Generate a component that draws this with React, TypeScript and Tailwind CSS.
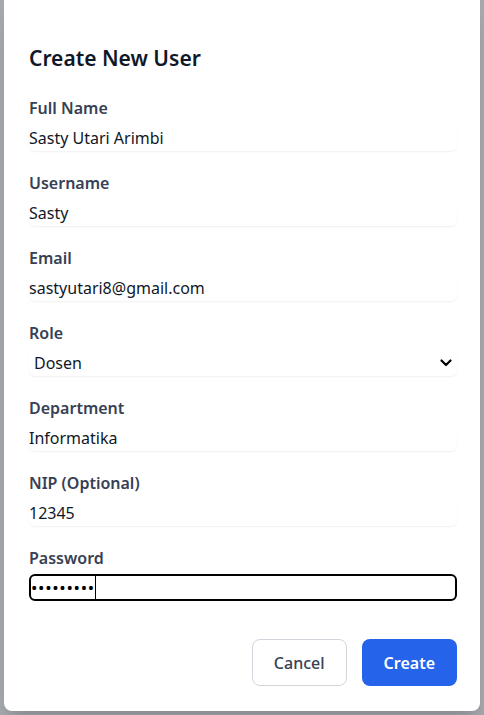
import { useState } from "react";

const fields = [
  { label: "Full Name", value: "Sasty Utari Arimbi", type: "text" },
  { label: "Username", value: "Sasty", type: "text" },
  { label: "Email", value: "sastyutari8@gmail.com", type: "email" },
];

const moreFields = [
  { label: "Department", value: "Informatika", type: "text" },
  { label: "NIP (Optional)", value: "12345", type: "text" },
];

function Field({ label, children }: { label: string; children: React.ReactNode }) {
  return (
    <div className="flex flex-col gap-1">
      <label className="text-base leading-6 font-semibold text-gray-700">{label}</label>
      {children}
    </div>
  );
}

function TextInput({ value, type }: { value: string; type: string }) {
  const [val, setVal] = useState(value);
  return (
    <input
      type={type}
      value={val}
      onChange={(e) => setVal(e.target.value)}
      className="h-[27px] w-full rounded-md bg-white px-0 text-base text-gray-900 shadow-[0_1px_2px_rgba(0,0,0,0.06)] outline-none"
    />
  );
}

export default function App() {
  const [role, setRole] = useState("Dosen");
  const [password, setPassword] = useState("sasty1234");

  return (
    <div
      className="h-[715px] w-full overflow-hidden bg-[#a5a8ad] px-[4px]"
      style={{ fontFamily: '"Noto Sans", "Open Sans", sans-serif' }}
    >
      <div className="rounded-b-lg bg-white pt-11 pr-[23px] pb-[25px] pl-[25px] shadow-xl">
        <h2 className="text-[21px] leading-7 font-semibold text-gray-900">Create New User</h2>

        <form className="mt-6 flex flex-col gap-5" onSubmit={(e) => e.preventDefault()}>
          {fields.map((f) => (
            <Field key={f.label} label={f.label}>
              <TextInput value={f.value} type={f.type} />
            </Field>
          ))}

          <Field label="Role">
            <div className="relative">
              <select
                value={role}
                onChange={(e) => setRole(e.target.value)}
                className="h-[27px] w-full appearance-none rounded-md bg-white pl-[5px] text-base text-gray-900 shadow-[0_1px_2px_rgba(0,0,0,0.06)] outline-none"
              >
                <option>Admin</option>
                <option>Dosen</option>
                <option>Mahasiswa</option>
              </select>
              <svg
                viewBox="0 0 12 8"
                className="pointer-events-none absolute top-[10px] right-[5px] h-[8px] w-[12px]"
                fill="none"
                stroke="black"
                strokeWidth="2.2"
                strokeLinecap="round"
                strokeLinejoin="round"
              >
                <path d="M1.5 1.5 6 6l4.5-4.5" />
              </svg>
            </div>
          </Field>

          {moreFields.map((f) => (
            <Field key={f.label} label={f.label}>
              <TextInput value={f.value} type={f.type} />
            </Field>
          ))}

          <Field label="Password">
            <div className="relative">
              <input
                type="password"
                value={password}
                onChange={(e) => setPassword(e.target.value)}
                className="h-[27px] w-full rounded-md border-2 border-black bg-white px-0 text-[17px] tracking-[0.7px] text-black caret-transparent outline-none"
              />
              <span className="pointer-events-none absolute top-[2px] bottom-[2px] left-[66px] w-px bg-black" />
            </div>
          </Field>

          <div className="mt-[18px] flex justify-end gap-[15px]">
            <button
              type="button"
              className="h-[47px] rounded-lg border border-gray-300 bg-white px-[21px] text-base font-medium text-gray-700"
            >
              Cancel
            </button>
            <button
              type="submit"
              className="h-[47px] rounded-lg bg-[#2563eb] px-[22px] text-base font-semibold text-white"
            >
              Create
            </button>
          </div>
        </form>
      </div>
    </div>
  );
}
